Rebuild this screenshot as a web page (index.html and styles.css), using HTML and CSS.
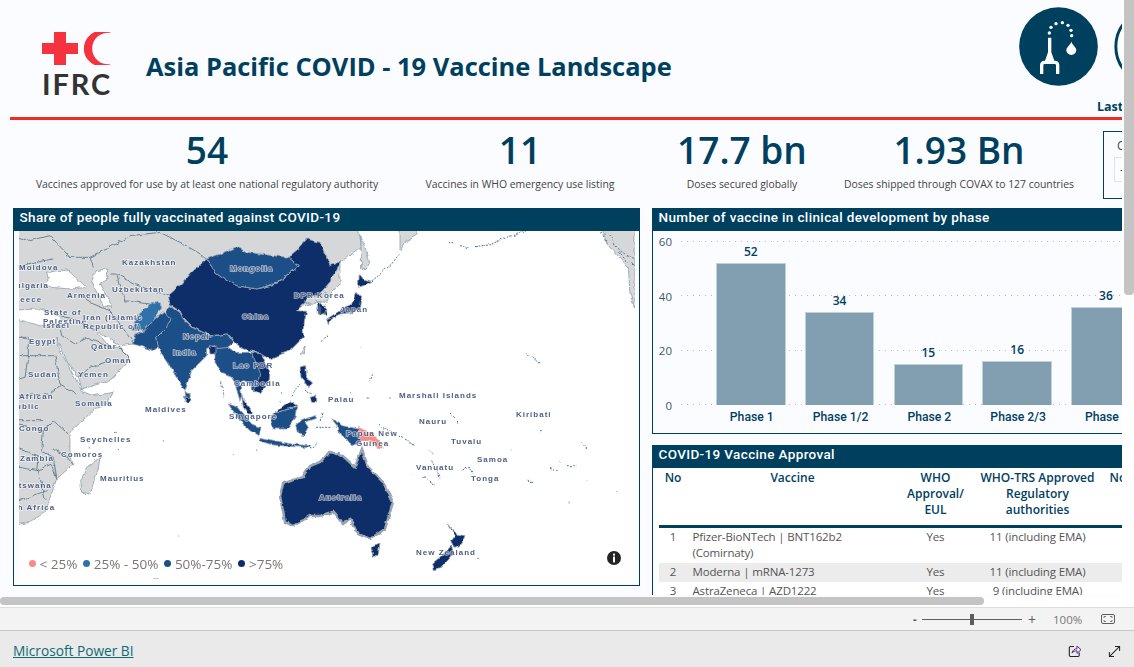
FILE: index.html
```html
<!DOCTYPE html>
<html lang="en">
<head>
<meta charset="utf-8">
<title>Asia Pacific COVID - 19 Vaccine Landscape</title>
<link rel="stylesheet" href="styles.css">
</head>
<body>
<div class="viewport">
  <main class="canvas">
    <header class="header">
      <div class="logo">
        <svg class="logo-mark" viewBox="0 0 70 33" aria-hidden="true">
          <path class="logo-red" d="M12 0H24V11H36V22H24V33H12V22H0V11H12Z"/>
          <path class="logo-red" d="M69 1A18 18 0 1 0 69 32A15.800 15.800 0 1 1 69 1Z"/>
        </svg>
        <span class="logo-text">IFRC</span>
      </div>
      <h1 class="title">Asia Pacific COVID - 19 Vaccine Landscape</h1>
      <div class="header-right">
        <div class="badges">
          <svg class="badge" viewBox="205 22 237 237" aria-hidden="true">
            <circle cx="323.500" cy="140.500" r="118" fill="#00405f"/>
            <g fill="#fff">
              <circle cx="296" cy="100" r="5"/><circle cx="301" cy="83" r="5"/><circle cx="316" cy="72" r="5"/><circle cx="335" cy="69" r="5"/><circle cx="352" cy="77" r="5"/><circle cx="361" cy="92" r="5"/><circle cx="363" cy="108" r="5"/>
              <path d="M362 126C366 137 377 143 377 151A15 15 0 0 1 347 151C347 143 358 137 362 126Z"/>
              <path d="M292 114H302V158L312 186H282L292 158Z"/>
            </g>
            <path d="M273 223V197Q273 188 282 188H312Q321 188 321 197V223" fill="none" stroke="#fff" stroke-width="10"/>
          </svg>
          <svg class="badge" viewBox="205 22 237 237" aria-hidden="true">
            <circle cx="323.500" cy="140.500" r="113" fill="#fff" stroke="#00405f" stroke-width="9"/>
          </svg>
        </div>
        <div class="updated">Last updated: 2021</div>
      </div>
    </header>
    <div class="rule"></div>

    <section class="kpis">
      <div class="kpi kpi-a"><div class="kpi-num">54</div><div class="kpi-label">Vaccines approved for use by at least one national regulatory authority</div></div>
      <div class="kpi kpi-b"><div class="kpi-num">11</div><div class="kpi-label">Vaccines in WHO emergency use listing</div></div>
      <div class="kpi kpi-c"><div class="kpi-num">17.7 bn</div><div class="kpi-label">Doses secured globally</div></div>
      <div class="kpi kpi-d"><div class="kpi-num">1.93 Bn</div><div class="kpi-label">Doses shipped through COVAX to 127 countries</div></div>
      <div class="filter">
        <div class="filter-label">Country</div>
        <div class="filter-box">- All</div>
      </div>
    </section>

    <section class="panels">
      <article class="card map-card">
        <h2 class="card-title">Share of people fully vaccinated against COVID-19</h2>
        <div class="map-wrap">
          <svg class="map" viewBox="19 232 620 353" aria-label="Map of vaccination share">
            <defs>
              <filter id="rough" x="0" y="0" width="100%" height="100%">
                <feTurbulence type="fractalNoise" baseFrequency=".16" numOctaves="2" seed="4" result="n"/>
                <feDisplacementMap in="SourceGraphic" in2="n" scale="4" xChannelSelector="R" yChannelSelector="G"/>
                <feGaussianBlur stdDeviation=".3"/>
              </filter>
              <filter id="soft" x="-5%" y="-5%" width="110%" height="110%">
                <feGaussianBlur stdDeviation=".25"/>
              </filter>
            </defs>
            <g filter="url(#rough)">
              <g transform="translate(10 205) scale(.33333)">
                <path class="land" d="M20 70H1045L1055 130L990 175V240L960 270L900 300L600 400L400 422L370 420L330 425L300 405L265 385L255 380L270 395L300 430L330 430L360 465L300 530L215 555L205 520L170 470L140 400L150 440L205 540L215 562L250 575L310 565L290 600L260 610L180 685V745L190 780L140 825L105 925L60 955L20 962Z"/>
                <path class="sea" d="M20 318L90 315L150 335L148 362L100 368L20 345Z"/>
                <path class="sea" d="M110 205L145 200L170 195L230 250L180 255L125 250L100 240L115 225Z"/>
                <path class="sea" d="M255 200L290 195L290 228L268 240L298 290L305 310L280 305L265 270L245 235Z"/>
                <path class="land" d="M270 760L265 795L240 870L215 865L212 830L230 790Z"/>
                <path class="border" d="M240 160L300 130L360 95L450 85L520 120L580 155L590 165M240 160L250 190M300 210L320 210L370 240L460 270L475 275M320 210L330 250L345 290L420 300M27 100L60 110L120 95L180 160L240 160M27 190L100 170L130 165M205 270L250 300L300 320L330 360L372 420M150 335L190 345L255 380M150 365L155 395L195 420L235 400L300 430M27 455H135M27 400H55V455L45 520L27 525M205 520L240 490L300 470M360 465L320 425M135 455L150 540L200 570M27 575L120 570L150 545"/>
                <path class="border" d="M27 660L100 680L130 650L175 690M100 680L95 740L130 760L140 820M130 735L175 760L190 780M27 735L85 755L80 800L125 780L140 825M27 790L85 800L105 885M27 890L110 860M27 650H100"/>
                <path class="c-high" d="M475 275L520 235L545 205L590 165L620 210L680 245L740 255L800 240L865 185L835 160L870 130L890 105L930 115L960 185L992 175L975 205L955 240L930 268L910 275L880 300L860 320L890 322L880 370V400L840 440L780 465L740 445L700 435L680 420L655 390L600 395L550 370L520 340L510 320L480 300Z"/>
                <path class="c-mid" d="M590 165L630 150L680 128L710 145L790 155L835 160L865 185L800 237L740 255L680 245L620 210Z"/>
                <path class="land" d="M880 290L910 275L945 265L960 272L950 295L922 293L905 302Z"/>
                <path class="c-mid" d="M440 400L470 370L465 325L480 305L510 325L520 345L550 372L600 397L655 390L672 415L640 440L625 460L615 425L590 430L590 455L545 500L525 562L505 530L470 470L445 435Z"/>
                <path class="c-mid" d="M372 395L400 382L435 345L460 322L480 345L470 370L440 400L445 430L430 440L372 420Z"/>
                <path class="c-low" d="M365 378L385 330L420 300L450 295L455 312L430 350L400 380Z"/>
                <path class="c-high" d="M597 425L625 430L620 450L600 450Z"/>
                <path class="c-mid" d="M525 565L540 570L542 590L528 590Z"/>
                <path class="c-high" d="M922 293L950 315L950 335L925 330Z"/>
              </g>
              <g transform="translate(320 205) scale(.33333)">
                <path class="land" d="M240 70H295L290 90L260 110L240 140Z"/>
                <path class="land" d="M122 95L135 130L148 170L135 200L125 195Z"/>
                <path class="land" d="M845 70H945V315L930 270L925 190L880 140L860 115Z"/>
                <path class="speck" d="M845 85L860 115M870 90L890 130L915 150L945 165M895 145L925 175M935 175L945 190M385 115L400 120M420 125L445 130M465 128L510 122L560 100L620 82M238 150L215 180L175 215L150 235M620 452L640 462L660 480"/>
                <path class="c-high" d="M118 210L130 225L155 232L130 245L115 250Z"/>
                <path class="c-high" d="M108 265L125 285L122 310L100 325L60 330L30 345L25 362L20 345L60 320L95 300Z"/>
                <path class="c-high" d="M0 295L18 310L15 330L0 335Z"/>
                <path class="speck" d="M22 395L0 415M155 510L148 530M120 428V430M92 565V568M140 582H146M208 582H212"/>
              </g>
              <g transform="translate(215 340) scale(.33333)">
                <path class="c-mid" d="M0 30L40 25L60 40L85 40L110 40L140 60L130 70L165 110L160 130L135 165L110 150L105 130L85 125L75 130L80 170L75 185L60 135L45 110L20 100L0 70Z"/>
                <path class="c-high" d="M110 40L140 45L165 100L162 130L135 165L115 150L130 125L135 100Z"/>
                <path class="c-high" d="M80 170L90 190L115 225L100 225L85 205Z"/>
                <path class="c-mid" d="M40 195L70 205L110 255L135 265L130 290L105 275L70 240Z"/>
                <path class="c-mid" d="M135 295L180 305L230 315L285 320L285 326L220 322L170 317L135 306Z"/>
                <path class="c-mid" d="M165 235L180 222L215 212L245 205L240 235L215 270L175 270Z"/>
                <path class="c-high" d="M180 220L225 185L245 200L215 212Z"/>
                <path class="c-mid" d="M245 255L260 245L300 230L305 238L270 250L280 265L265 290L250 285Z"/>
                <path class="c-high" d="M255 85L272 80L275 120L295 130L280 145L258 115Z"/>
                <path class="c-high" d="M285 175L305 170L305 190L290 190Z"/>
                <path class="land" d="M255 45L270 20L268 45L260 48Z"/>
                <path class="c-mid" d="M350 240L385 260L430 270L435 310L410 320L395 300L375 285L370 265Z"/>
                <path class="c-salmon" d="M430 265L470 285L490 300L505 328L485 325L460 305L440 305L435 310Z"/>
                <path class="speck" d="M230 170L255 135M270 150L290 165M320 220L315 250M300 265L365 265M490 255L545 290M550 290L600 320M285 330L305 315M200 160V163M195 185V188M20 130L25 175M125 335V338"/>
                <path class="c-mid" d="M345 345L375 340L360 360Z"/>
              </g>
              <path class="c-high" d="M283 485L303 477L310 467L320 463L330 453L343 457L355 468L362 450L368 468L383 483L393 503L385 530L370 540L358 535L350 520L343 525L333 513L320 517L310 517L293 527L285 523L280 497Z"/>
              <g transform="translate(10 400) scale(.33333)">
                <path class="c-high" d="M520 -5H545L535 12Z"/>
                <path class="speck" d="M460 124V127M325 150V153M238 145V148M315 100H320M670 165V167M505 410V412M430 540H445"/>
              </g>
              <g transform="translate(320 400) scale(.33333)">
                <path class="speck" d="M330 155L340 165M335 185L360 235M310 235L345 258M425 212L450 205L460 225M620 247H640M690 205L710 215M720 190V192M740 200L770 200M785 130L800 150M800 245V248M750 307V310M890 277V279M390 45L420 75M660 95H665M570 155H574M278 228V231"/>
                <path class="c-high" d="M385 375L410 405L435 410L425 435L405 445L395 425L405 410Z"/>
                <path class="c-high" d="M395 440L400 465L365 505L340 512L335 495L365 470Z"/>
                <path class="c-high" d="M150 443L180 432L175 465L160 475Z"/>
                <path class="speck" d="M475 478L482 484"/>
              </g>
            </g>
            <g class="labels" filter="url(#soft)">
              <text x="122" y="266">Kazakhstan</text><text x="19" y="271">Moldova</text><text x="230" y="272">Mongolia</text>
              <text x="112" y="293">Uzbekistan</text><text x="9" y="289">Bulgaria</text><text x="67" y="299">Armenia</text>
              <text x="9" y="303">Greece</text><text x="44" y="316">State of</text><text x="43" y="325">Palestine</text>
              <text x="43" y="329">Israel</text><text x="83" y="321">Iran (Islamic</text><text x="83" y="330">Republic of)</text>
              <text x="29" y="345">Egypt</text><text x="91" y="350">Qatar</text><text x="105" y="364">Oman</text>
              <text x="28" y="378">Sudan</text><text x="78" y="378">Yemen</text><text x="19" y="400">African</text>
              <text x="-2" y="410">Republic</text><text x="75" y="407">Somalia</text><text x="145" y="413">Maldives</text>
              <text x="19" y="432">Congo</text><text x="80" y="443">Seychelles</text><text x="61" y="458">Comoros</text>
              <text x="20" y="462">Zambia</text><text x="6" y="489">Botswana</text><text x="100" y="482">Mauritius</text>
              <text x="-4" y="511">South Africa</text><text x="242" y="320">China</text><text x="294" y="299">DPR Korea</text>
              <text x="340" y="313">Japan</text><text x="183" y="340">Nepal</text><text x="173" y="356">India</text>
              <text x="233" y="369">Lao PDR</text><text x="234" y="387">Cambodia</text><text x="229" y="420">Singapore</text>
              <text x="328" y="403">Palau</text><text x="399" y="399">Marshall Islands</text><text x="419" y="425">Nauru</text>
              <text x="516" y="418">Kiribati</text><text x="346" y="437">Papua New</text><text x="356" y="447">Guinea</text>
              <text x="451" y="445">Tuvalu</text><text x="477" y="463">Samoa</text><text x="416" y="471">Vanuatu</text>
              <text x="471" y="482">Tonga</text><text x="319" y="501">Australia</text><text x="416" y="556">New Zealand</text>
            </g>
          </svg>
          <ul class="legend">
            <li class="legend-item"><span class="dot dot-a"></span>&lt; 25%</li>
            <li class="legend-item"><span class="dot dot-b"></span>25% - 50%</li>
            <li class="legend-item"><span class="dot dot-c"></span>50%-75%</li>
            <li class="legend-item"><span class="dot dot-d"></span>&gt;75%</li>
          </ul>
          <svg class="info" viewBox="0 0 14 14" aria-hidden="true">
            <circle cx="7" cy="7" r="7" fill="#252423"/>
            <rect x="6" y="2.600" width="2" height="2" fill="#fff"/>
            <rect x="6" y="5.600" width="2" height="5.800" fill="#fff"/>
          </svg>
        </div>
      </article>

      <div class="right-col">
        <article class="card chart-card">
          <h2 class="card-title">Number of vaccine in clinical development by phase</h2>
          <div class="chart">
            <div class="y-axis"><span>60</span><span>40</span><span>20</span><span>0</span></div>
            <div class="chart-main">
              <div class="plot">
                <div class="gridlines"><i></i><i></i><i></i><i></i></div>
                <div class="col"><span class="val">52</span><div class="bar" style="height:142px"></div></div>
                <div class="col"><span class="val">34</span><div class="bar" style="height:93px"></div></div>
                <div class="col"><span class="val">15</span><div class="bar" style="height:41px"></div></div>
                <div class="col"><span class="val">16</span><div class="bar" style="height:44px"></div></div>
                <div class="col"><span class="val">36</span><div class="bar" style="height:98px"></div></div>
              </div>
              <div class="cats"><span>Phase 1</span><span>Phase 1/2</span><span>Phase 2</span><span>Phase 2/3</span><span>Phase 3</span></div>
            </div>
          </div>
        </article>

        <article class="card table-card">
          <h2 class="card-title">COVID-19 Vaccine Approval</h2>
          <table class="vaccines">
            <colgroup><col class="c1"><col class="c2"><col class="c3"><col class="c4"><col class="c5"></colgroup>
            <thead>
              <tr><th>No</th><th>Vaccine</th><th>WHO Approval/ EUL</th><th>WHO-TRS Approved Regulatory authorities</th><th class="th-more">No. of countries</th></tr>
            </thead>
            <tbody>
              <tr><td class="ctr">1</td><td class="name">Pfizer-BioNTech | BNT162b2 (Comirnaty)</td><td class="ctr">Yes</td><td class="ctr">11 (including EMA)</td><td></td></tr>
              <tr class="alt"><td class="ctr">2</td><td class="name">Moderna | mRNA-1273</td><td class="ctr">Yes</td><td class="ctr">11 (including EMA)</td><td></td></tr>
              <tr><td class="ctr">3</td><td class="name">AstraZeneca | AZD1222</td><td class="ctr">Yes</td><td class="ctr">9 (including EMA)</td><td></td></tr>
            </tbody>
          </table>
        </article>
      </div>
    </section>
  </main>
  <div class="vscroll"><div class="vthumb"></div></div>
</div>
<div class="hscroll"><div class="hthumb"></div></div>
<div class="zoombar">
  <span class="zoom-minus">-</span>
  <div class="slider"><span class="slider-thumb"></span></div>
  <span class="zoom-plus">+</span>
  <span class="zoom-pct">100%</span>
  <svg class="fit" viewBox="0 0 14 10" aria-hidden="true">
    <rect x=".5" y=".5" width="13" height="9" rx="1.500" fill="none" stroke="#605e5c"/>
    <path d="M3 4V2.500H5M9 2.500H11V4M11 6V7.500H9M5 7.500H3V6" fill="none" stroke="#605e5c" stroke-width=".8"/>
  </svg>
</div>
<footer class="footer">
  <a class="pbi" href="#">Microsoft Power BI</a>
  <svg class="foot-share" viewBox="0 0 14 14" aria-hidden="true">
    <path d="M6 2.500H2.500A1.200 1.200 0 0 0 1.300 3.700V11.300A1.200 1.200 0 0 0 2.500 12.500H10A1.200 1.200 0 0 0 11.200 11.300V8.500" fill="none" stroke="#252423" stroke-width="1.100"/>
    <path d="M4 9C4.500 6 7 4.700 9 4.700V2L13 5.700L9 9.400V6.800C7 6.800 5 7.400 4 9Z" fill="none" stroke="#5b2a86" stroke-width="1"/>
  </svg>
  <svg class="foot-expand" viewBox="0 0 14 14" aria-hidden="true">
    <path d="M1.500 12.500L12.500 1.500M7.500 1.500H12.500V6.500M1.500 7.500V12.500H6.500" fill="none" stroke="#252423" stroke-width="1.100"/>
  </svg>
</footer>
</body>
</html>
```

FILE: styles.css
```css
* { box-sizing: border-box; }
html, body { margin: 0; padding: 0; }
body {
  width: 1134px;
  height: 667px;
  overflow: hidden;
  background: #fff;
  font-family: "Open Sans", "Noto Sans", sans-serif;
  color: #00405f;
}
.viewport { display: flex; height: 597px; }
.canvas {
  width: 1122px;
  height: 597px;
  overflow: hidden;
  background: #fafcff;
  flex: none;
}

/* header */
.header { display: flex; height: 117px; align-items: flex-start; padding-left: 42px; }
.logo { width: 70px; margin-top: 32px; flex: none; }
.logo-mark { display: block; width: 70px; height: 33px; }
.logo-red { fill: #f5333f; }
.logo-text {
  display: block;
  margin-top: 6px;
  font: 700 29px/26px "Lato", "Open Sans", sans-serif;
  color: #333;
  letter-spacing: 1.900px;
}
.title {
  margin: 48px 0 0 34px;
  flex: 1;
  font-size: 25.450px;
  line-height: 36px;
  font-weight: 700;
  white-space: nowrap;
}
.header-right { width: 103px; flex: none; overflow: hidden; padding-top: 7px; }
.badges { display: flex; gap: 16px; width: 200px; }
.badge { width: 79px; height: 79px; flex: none; }
.updated {
  margin: 13px 0 0 78px;
  width: 120px;
  font-size: 12.500px;
  line-height: 16px;
  font-weight: 700;
  white-space: nowrap;
}
.rule { height: 3px; margin-left: 10px; background: #ee2d2a; }

/* KPI */
.kpis { display: flex; height: 88px; }
.kpi { text-align: center; padding-top: 9px; flex: none; }
.kpi-a { width: 366px; margin-left: 24px; }
.kpi-b { width: 260px; }
.kpi-c { width: 184px; }
.kpi-d { width: 250px; }
.kpi-num { font-size: 37px; line-height: 42px; font-weight: 600; white-space: nowrap; }
.kpi-label { margin-top: 5px; font-size: 10.400px; line-height: 16px; color: #444; white-space: nowrap; }
.filter {
  margin: 11px 0 0 19px;
  width: 70px;
  height: 68px;
  flex: none;
  border: 1.500px solid #00405f;
  padding: 7px 0 0 13px;
  font-size: 12px;
  color: #444;
}
.filter-label { line-height: 14px; }
.filter-box {
  margin: 4px 0 0 -3px;
  height: 25px;
  width: 60px;
  border: 1px solid #e3e3e3;
  line-height: 23px;
  padding-left: 5px;
}

/* panels */
.panels { display: flex; height: 387px; gap: 12px; padding-left: 13px; }
.card { border-left: 1.500px solid #00405f; }
.card-title {
  margin: 0 0 0 -1.500px;
  height: 23px;
  padding-left: 7px;
  background: #00405f;
  color: #fff;
  font: 500 13.500px/18px "Roboto", sans-serif;
  letter-spacing: .36px;
  white-space: nowrap;
}
.map-card {
  width: 627px;
  height: 378px;
  flex: none;
  border: 1.500px solid #00405f;
  border-top: 0;
}
.map-wrap { position: relative; height: 353.500px; padding-left: 4.500px; background: #fafcff; }
.map { display: block; width: 620px; height: 353px; background: #fff; }
.land { fill: #d6d7d9; stroke: #6f8695; stroke-width: 1.800; }
.sea { fill: #fff; stroke: #6f8695; stroke-width: 1.800; }
.border { fill: none; stroke: #567286; stroke-width: 2.500; }
.c-high { fill: #0a2f68; stroke: #9aa5b2; stroke-width: 2.500; }
.c-mid { fill: #1e5088; stroke: #9aa5b2; stroke-width: 2.500; }
.c-low { fill: #2f72a9; stroke: #9aa5b2; stroke-width: 2.500; }
.c-salmon { fill: #fa8a86; stroke: #c5a0a0; stroke-width: 1.500; }
.speck { fill: none; stroke: #4f7490; stroke-width: 3; stroke-dasharray: 6 4; }
.labels text {
  font: 700 8px "Liberation Sans", sans-serif;
  letter-spacing: 1px;
  fill: #4d5f82;
  stroke: rgba(255, 255, 255, .65);
  stroke-width: 1.500px;
  paint-order: stroke;
}
.legend {
  position: absolute;
  left: 15px;
  bottom: 12px;
  margin: 0;
  padding: 0;
  list-style: none;
  display: flex;
  gap: 6px;
  font-size: 13.500px;
  line-height: 18px;
  color: #7b7672;
}
.legend-item { display: flex; align-items: center; gap: 3.500px; white-space: nowrap; }
.dot { width: 7px; height: 7px; border-radius: 50%; }
.dot-a { background: #fa8a86; }
.dot-b { background: #2f72a9; }
.dot-c { background: #1e5088; }
.dot-d { background: #0a2f68; }
.info { position: absolute; left: 593px; top: 320px; width: 14px; height: 14px; }

/* right column */
.right-col { width: 680px; height: 387px; flex: none; overflow: hidden; }
.chart-card { height: 226px; border-bottom: 1.500px solid #00405f; }
.chart { display: flex; padding-top: 10px; }
.y-axis {
  width: 28px;
  height: 180px;
  margin-top: -7px;
  flex: none;
  display: flex;
  flex-direction: column;
  justify-content: space-between;
  align-items: flex-end;
  font-size: 11.500px;
  line-height: 16px;
  color: #44586a;
  padding-right: 9px;
}
.chart-main { flex: 1; }
.plot {
  position: relative;
  height: 164px;
  display: flex;
  align-items: flex-end;
  gap: 19.200px;
  padding-left: 35px;
}
.gridlines {
  position: absolute;
  inset: 0;
  display: flex;
  flex-direction: column;
  justify-content: space-between;
}
.gridlines i {
  display: block;
  height: 1px;
  background-image: linear-gradient(to right, #b5bac0 1px, transparent 1px);
  background-size: 6px 1px;
}
.col { position: relative; width: 69.600px; flex: none; display: flex; flex-direction: column; align-items: center; }
.val { font-size: 12px; line-height: 16px; font-weight: 600; margin-bottom: 3px; }
.bar { width: 100%; background: #819fb0; border: 1px solid #c4d0d8; border-bottom: 0; }
.cats { display: flex; gap: 19.200px; padding-left: 36px; margin-top: 4px; }
.cats span {
  width: 69.600px;
  flex: none;
  text-align: center;
  font: 500 12.200px/16px "Roboto", sans-serif;
  white-space: nowrap;
}

/* table */
.table-card { margin-top: 11px; height: 150px; background: #fff; overflow: hidden; }
.vaccines {
  table-layout: fixed;
  border-collapse: collapse;
  width: 600px;
  margin-left: 5.500px;
  font-size: 11.500px;
  line-height: 16px;
  letter-spacing: -.15px;
  color: #555;
}
.c1 { width: 29px; }
.c2 { width: 210px; }
.c3 { width: 76px; }
.c4 { width: 128px; }
.c5 { width: 157px; }
.vaccines th {
  vertical-align: top;
  font-size: 12px;
  letter-spacing: 0;
  font-weight: 600;
  color: #00405f;
  padding: 2px 2px 7px;
  border-bottom: 3px solid #00405f;
}
.vaccines .th-more { text-align: left; padding-left: 8px; }
.vaccines td { vertical-align: top; padding: 1px 0 2px; }
.vaccines .ctr { text-align: center; }
.vaccines .name { padding-left: 5px; }
.alt td { background: #ececec; }

/* scrollbars */
.vscroll { width: 12px; flex: none; padding-left: 2px; }
.vthumb { width: 10px; height: 295px; background: #c4c4c4; border-radius: 0 0 4px 4px; }
.hscroll { height: 10px; background: #fff; }
.hthumb { width: 984px; height: 8px; background: #c4c4c4; border-radius: 4px; }

/* zoom bar */
.zoombar {
  height: 24px;
  background: #f3f3f3;
  border-top: 1px solid #dedede;
  border-bottom: 1px solid #c8c8c8;
  display: flex;
  align-items: center;
  font-size: 11.500px;
  color: #7a7875;
  padding-left: 913px;
}
.zoom-minus { width: 9px; font-weight: 700; color: #605e5c; }
.slider { position: relative; width: 100px; height: 1px; background: #605e5c; }
.slider-thumb { position: absolute; left: 48px; top: -5px; width: 4px; height: 11px; background: #605e5c; }
.zoom-plus { width: 31px; padding-left: 6px; font-size: 14px; color: #605e5c; }
.zoom-pct { width: 48px; }
.fit { width: 14px; height: 10px; }

/* footer */
.footer { height: 36px; background: #eaeaea; display: flex; align-items: center; padding-left: 13px; padding-top: 4px; }
.pbi { font-size: 13.700px; line-height: 18px; color: #0f6a75; }
.foot-share { width: 14px; height: 14px; margin-left: 934px; }
.foot-expand { width: 13px; height: 13px; margin-left: 26px; }
```
